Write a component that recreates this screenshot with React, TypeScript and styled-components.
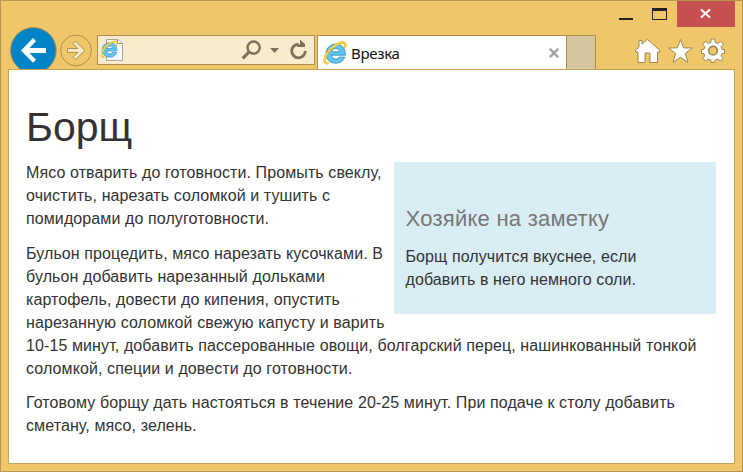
import React from "react";
import styled, { createGlobalStyle } from "styled-components";

const GlobalStyle = createGlobalStyle`
  * { box-sizing: border-box; }
  body { margin: 0; font-family: "Liberation Sans", Arial, sans-serif; }
`;

const Frame = styled.div`
  width: 743px;
  height: 472px;
  display: flex;
  flex-direction: column;
  border: 1px solid #b5984d;
  padding: 0 7px 7px;
  background: #efc76a;
`;

const Caption = styled.div`
  height: 26px;
  flex: none;
  display: flex;
  justify-content: flex-end;
  gap: 10px;
`;

const CaptionIcons = styled.svg`
  width: 50px;
  height: 26px;
`;

const CloseButton = styled.div`
  width: 58px;
  height: 26px;
  background: #c75050;
  svg { display: block; }
`;

const Toolbar = styled.div`
  height: 42px;
  flex: none;
  display: flex;
  align-items: flex-start;
  overflow: hidden;
`;

const NavButtons = styled.svg`
  width: 88px;
  height: 42px;
  margin-right: 1px;
  flex: none;
`;

const AddressBar = styled.div`
  width: 218px;
  height: 30px;
  margin-top: 8px;
  flex: none;
  display: flex;
  justify-content: space-between;
  border: 1px solid #ab8f4a;
  background: #faebcc;
`;

const AddressTools = styled.svg`
  width: 76px;
  height: 28px;
`;

const PageIcon = styled.svg`
  width: 24px;
  height: 24px;
  margin: 2px 0 0 3px;
`;

const Tab = styled.div`
  width: 250px;
  height: 34px;
  margin: 8px 0 0 2px;
  flex: none;
  display: flex;
  align-items: center;
  border: 1px solid #ab8f4a;
  border-bottom: 0;
  background: #fff;
  padding: 1px 7px 0 5px;
`;

const TabTitle = styled.span`
  flex: 1;
  margin-left: 4px;
  font: 15px/22px "Noto Sans", sans-serif;
  letter-spacing: -0.3px;
  color: #111;
`;

const NewTab = styled.div`
  width: 29px;
  height: 34px;
  margin-top: 8px;
  flex: none;
  border: 1px solid #ab8f4a;
  border-width: 1px 1px 0 0;
  background: #d6c69e;
`;

const Commands = styled.svg`
  width: 96px;
  height: 30px;
  margin: 8px 9px 0 auto;
  flex: none;
`;

const Page = styled.main`
  flex: 1;
  width: 727px;
  border: 1px solid #c5a452;
  background: #fff;
  padding: 33px 18px 0 17px;
  color: #333;
  font-size: 16px;
  line-height: 23px;
`;

const Title = styled.h1`
  margin: 0 0 10px;
  font-size: 41px;
  font-weight: 400;
  line-height: 48px;
`;

const Text = styled.p`
  margin: 0 0 11.5px;
  letter-spacing: 0.1px;
`;

const Note = styled.aside`
  float: right;
  width: 322px;
  height: 152px;
  margin: 1px 0 0 7px;
  padding: 44px 12px 0 11.5px;
  background: #d9edf5;
`;

const NoteTitle = styled.h2`
  margin: 0 0 14px;
  color: #777;
  font-size: 22px;
  font-weight: 400;
  line-height: 25px;
  letter-spacing: 0.25px;
`;

const ExplorerMark = () => (
  <g fill="none">
    <path
      fillRule="evenodd"
      d="M22.4 14.2H8.6c.3 4.2 5.9 5 7.6 1.9h5.6c-1.3 3.7-4.7 6.1-9 6.1-5.7 0-9.8-3.7-9.8-9.4 0-5.8 4.3-9.7 9.8-9.7 6.2 0 9.8 4.4 9.6 11.1zM8.7 10.8h8c-.4-4.2-7.4-4.3-8 0z"
      fill="#64c4ef"
      stroke="#2a86bd"
      strokeWidth=".8"
    />
    <path d="M5.6 22.2C-1.2 22.8 1.6 14 8 7.8c5.3-5.3 12.7-8 14.2-5 .6 1.1.1 2.6-.6 4.1" stroke="#e0ad2c" strokeWidth="2.3" />
    <path d="M5.6 22.2C-1.2 22.8 1.6 14 8 7.8c5.3-5.3 12.7-8 14.2-5 .6 1.1.1 2.6-.6 4.1" stroke="#ffd53c" strokeWidth="1.6" />
  </g>
);

export default function App() {
  return (
    <>
      <GlobalStyle />
      <Frame>
        <Caption>
          <CaptionIcons viewBox="0 0 50 26">
            <path d="M2 17h14v2H2z" fill="#222" />
            <path d="M35 7h15v12H35zM36 10v8h13v-8z" fill="#222" fillRule="evenodd" />
          </CaptionIcons>
          <CloseButton>
            <svg width="58" height="26">
              <path d="m24 8.5 9 8M33 8.5l-9 8" stroke="#fff" strokeWidth="2" />
            </svg>
          </CloseButton>
        </Caption>
        <Toolbar>
          <NavButtons viewBox="0 0 88 42">
            <circle cx="25.4" cy="23.4" r="22.8" fill="#0084c8" stroke="#a78b48" strokeWidth="1" />
            <path d="M13 23.4 25 11l3 3.2-6.5 6.9H38v4.8H21.5l6.5 6.8-3 3z" fill="#fff" />
            <circle cx="68" cy="23.4" r="15.4" fill="none" stroke="#ab8f4a" />
            <path d="M59.5 21.5h10.4l-5-5.2 2.7-2.1 9.2 9.3-9.2 9-2.7-2.2 5-5H59.5z" fill="#faebcc" stroke="#ab8f4a" strokeWidth="1" />
          </NavButtons>
          <AddressBar>
            <PageIcon viewBox="0 0 24 24">
              <path d="M5.5 1.5h11l5 4v17h-16z" fill="#f8f9fb" stroke="#a5a6a8" />
              <path d="M16.5 1.5v4h5" fill="#fff" stroke="#88898c" />
              <g transform="translate(-1 2.3) scale(.76)"><ExplorerMark /></g>
            </PageIcon>
            <AddressTools viewBox="0 0 76 28">
              <g fill="none" stroke="#7a705b">
                <circle cx="15.6" cy="11.6" r="6.1" strokeWidth="2.4" />
                <path d="m11 16-6.2 6.4" strokeWidth="3.2" />
                <path d="M60.3 8.2a6.8 6.8 0 1 0 7 6.8" strokeWidth="2.8" />
              </g>
              <path d="M32 12h9l-4.5 5z" fill="#7a705b" />
              <path d="M62 3.5 67 8v3h-8V8.6h3z" fill="#7a705b" />
            </AddressTools>
          </AddressBar>
          <Tab>
            <svg width="24" height="24" viewBox="0 0 24 24"><ExplorerMark /></svg>
            <TabTitle>Врезка</TabTitle>
            <svg width="10" height="10">
              <path d="m.8.8 8.4 8.4m0-8.4L.8 9.2" stroke="#a5a5a5" strokeWidth="2.5" />
            </svg>
          </Tab>
          <NewTab />
          <Commands viewBox="0 0 96 30">
            <g fill="#fff" stroke="#9b874f" strokeWidth="1" strokeLinejoin="round">
              <path d="M8 27.5V17H5.5v-1.5L9 12V5.5h3V9l5.5-4.5L30 15.5V17h-2.5v10.5H20V18h-5v9.5z" />
              <path d="m50.5 4.5 3 8.3 8.8.2-7 5.5 2.6 8.8-7.4-5-7.4 5 2.6-8.8-7-5.5 8.8-.2z" />
              <g transform="translate(83 15.5)">
                <path d="M-2-11.5h4v3.2l3 1.2 2.4-2.2 3 3L8.1-3.8 9.2-1h2.3v4H9.2L8.1 5.3l2.3 2.3-3 3L5 8.5 2 9.7v2.3h-4V9.7l-3-1.2-2.4 2.1-3-3 2.3-2.3L-9.2 3h-2.3v-4h2.3l1.1-2.8-2.3-2.5 3-3L-5-7.1l3-1.2z" />
                <circle r="4.3" cy=".2" fill="#efc76a" strokeWidth="1.6" />
              </g>
            </g>
          </Commands>
        </Toolbar>
        <Page>
          <Title>Борщ</Title>
          <Note>
            <NoteTitle>Хозяйке на заметку</NoteTitle>
            <Text>Борщ получится вкуснее, если добавить в него немного соли.</Text>
          </Note>
          <Text>
            Мясо отварить до готовности. Промыть свеклу, очистить, нарезать соломкой и тушить с помидорами до
            полуготовности.
          </Text>
          <Text>
            Бульон процедить, мясо нарезать кусочками. В бульон добавить нарезанный дольками картофель, довести до
            кипения, опустить нарезанную соломкой свежую капусту и варить 10-15 минут, добавить пассерованные овощи,
            болгарский перец, нашинкованный тонкой соломкой, специи и довести до готовности.
          </Text>
          <Text>
            Готовому борщу дать настояться в течение 20-25 минут. При подаче к столу добавить сметану, мясо, зелень.
          </Text>
        </Page>
      </Frame>
    </>
  );
}
